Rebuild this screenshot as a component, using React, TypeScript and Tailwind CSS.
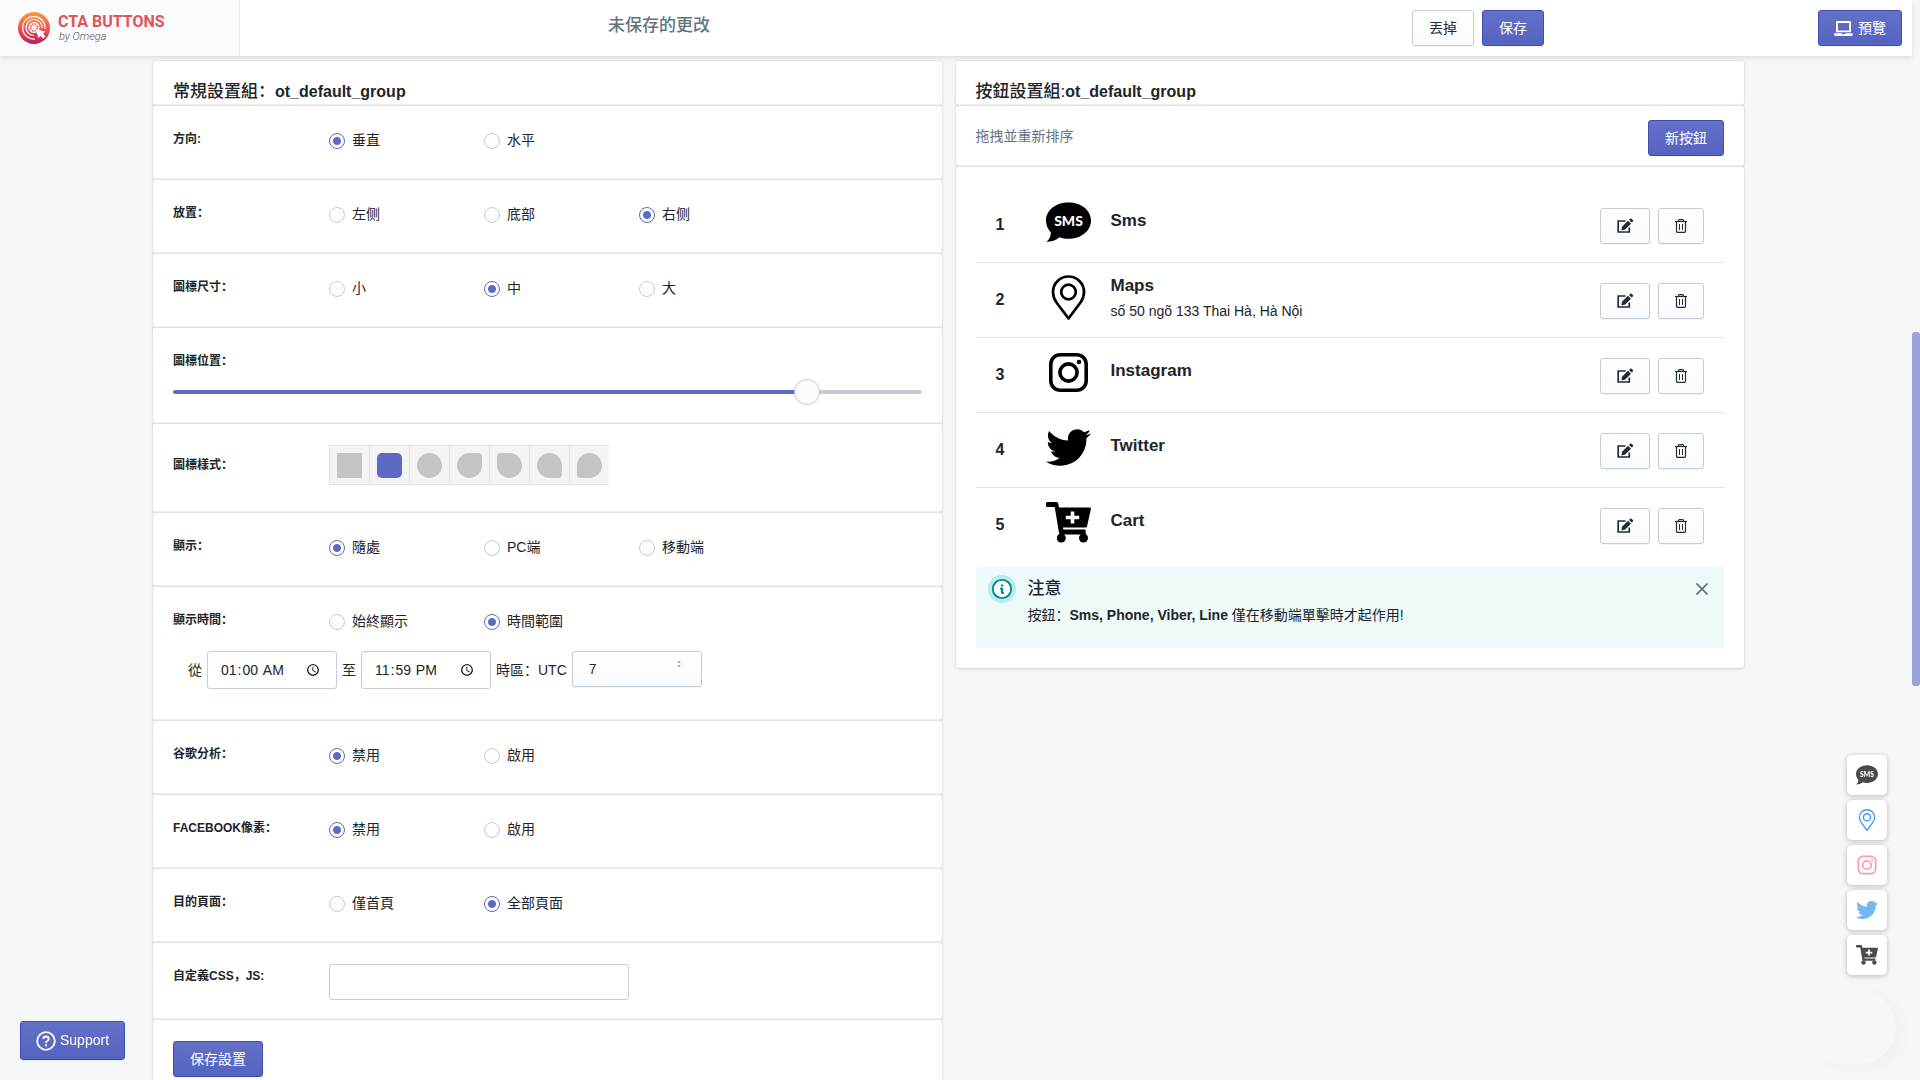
import React from "react";
import { FaLaptop, FaTwitter } from "react-icons/fa";

const primary =
  "rounded-[3px] border border-[#3f4eae] bg-linear-to-b from-[#6371c7] to-[#5563c1] text-white text-sm leading-5 shadow-[0_1px_0_rgba(22,29,37,0.05)]";
const plain =
  "rounded-[3px] border border-[#c4cdd5] bg-linear-to-b from-white to-[#f9fafb] text-[#212b36] text-sm leading-5 shadow-[0_1px_0_rgba(22,29,37,0.05)]";
const card =
  "bg-white rounded-[3px] shadow-[0_0_0_1px_rgba(63,63,68,0.05),0_1px_3px_rgba(63,63,68,0.15)]";
const row = `${card} border-t border-[#dfe3e8] px-5`;

type IconProps = { className?: string };

const SmsIcon = ({ className }: IconProps) => (
  <svg viewBox="0 0 45 45" className={className}>
    <path
      d="M22.5 2.5C35 2.5 45 10 45 20.500C45 31 35 38.800 22.500 38.800C19.400 38.800 16.300 38.300 13.500 37.300C10 40.500 5.500 41.700 .5 41.700C3.500 39 5 36 4.800 32.200C1.800 29.200 0 25 0 20.500C0 10 10 2.500 22.500 2.500Z"
      fill="currentColor"
    />
    <text x="22.5" y="26" textAnchor="middle" fontFamily="Lato, sans-serif" fontWeight="900" fontSize="14" fill="#fff">
      SMS
    </text>
  </svg>
);

const PinIcon = ({ className }: IconProps) => (
  <svg viewBox="0 0 45 45" className={className} fill="none" stroke="currentColor" strokeWidth="2.7">
    <path d="M22.500 43.500L10.500 27.500C8 24 7 21 7 17C7 8.500 14 1.500 22.500 1.500S38 8.500 38 17C38 21 37 24 34.500 27.500Z" strokeLinejoin="round" />
    <circle cx="22.500" cy="17" r="7.300" />
  </svg>
);

const InstagramIcon = ({ className }: IconProps) => (
  <svg viewBox="0 0 45 45" className={className} fill="none" stroke="currentColor" strokeWidth="3.600">
    <rect x="4.800" y="4.800" width="35.400" height="35.400" rx="9.500" />
    <circle cx="22.500" cy="22.500" r="8.600" />
    <circle cx="33" cy="12" r="2.300" fill="currentColor" stroke="none" />
  </svg>
);

const TwitterIcon = ({ className }: IconProps) => <FaTwitter className={className} />;

const CartIcon = ({ className }: IconProps) => (
  <svg viewBox="0 0 45 45" className={className} fill="currentColor">
    <path
      fillRule="evenodd"
      d="M1.500 2H10.500Q12 2 12.300 3.500L13 7.500H43.500Q45.200 7.500 44.900 9L41 26.500Q40.800 27.500 39.800 27.500H17L17.300 29.500H38.500Q39.700 29.500 39.700 30.700V34.500H14.500Q13.300 34.500 13.100 33.300L8.700 7H1.500Q0 7 0 5.500V3.500Q0 2 1.500 2ZM24.700 11.500V15.700H19.800V19.300H24.700V23.500H28.300V19.300H33.200V15.700H28.300V11.500Z"
    />
    <circle cx="15.300" cy="38" r="4.500" />
    <circle cx="37.500" cy="38" r="4.500" />
  </svg>
);

const EditIcon = () => (
  <svg viewBox="0 0 16 16" className="w-4 h-4">
    <path d="M8.500 3H1.200V14H12.300V9.500" fill="none" stroke="currentColor" strokeWidth="1.700" />
    <path d="M4.500 12.500L5 8.700L11 2.700L14 5.700L8.200 11.600Z" fill="currentColor" />
    <path d="M12 1.900L13.200 .7Q14 .2 14.600 .7L15.900 2Q16.400 2.600 15.900 3.400L14.700 4.600Z" fill="currentColor" />
  </svg>
);

const TrashIcon = () => (
  <svg viewBox="0 0 12 14" className="w-3 h-[14px]" fill="none" stroke="currentColor">
    <path d="M0 2.500H12" strokeWidth="1.200" />
    <path d="M3.500 2.500V1.500Q3.500 .6 4.400 .6H7.600Q8.500 .6 8.500 1.500V2.500M1.500 2.500V12.300Q1.500 13.300 2.500 13.300H9.500Q10.500 13.300 10.500 12.300V2.500" strokeWidth="1.200" />
    <path d="M4.500 5V11M7.500 5V11" />
  </svg>
);

const Logo = () => (
  <svg viewBox="0 0 32 32" className="w-8 h-8">
    <defs>
      <linearGradient id="logo" x1="0" y1="0" x2="0" y2="1">
        <stop offset="0" stopColor="#fb9a3c" />
        <stop offset="0.500" stopColor="#ea5a50" />
        <stop offset="1" stopColor="#c2185f" />
      </linearGradient>
    </defs>
    <circle cx="16" cy="16" r="16" fill="url(#logo)" />
    <g fill="none" stroke="#fff" strokeWidth="1.200">
      <path d="M17 27A11.200 11.200 0 1 1 27 17" />
      <path d="M16 23.500A8 8 0 1 1 24 16" />
      <circle cx="16" cy="15.500" r="5" />
      <path d="M16 10.500V20.500M11 15.500H21M12.500 12L19.500 19M19.500 12L12.500 19" />
    </g>
    <path d="M17.500 17L27.500 19.800L24.800 21.500L27.500 24.200L25 26.500L22.300 23.800L20.500 26.200Z" fill="#fff" />
  </svg>
);

const GroupTitle = ({ text }: { text: string }) => (
  <section className={`${card} px-5 pt-[17px] h-11`}>
    <h2 className="text-[17px] leading-7 font-medium">
      {text}
      <span className="text-base font-bold">ot_default_group</span>
    </h2>
  </section>
);

type RowProps = { label: string; name: string; options: string[]; value: number; children?: React.ReactNode };

const RadioRow = ({ label, name, options, value, children }: RowProps) => (
  <section className={`${row} pt-[22px] pb-[26px]`}>
    <div role="radiogroup" aria-labelledby={name} className="flex">
      <h3 id={name} className="w-39 shrink-0 text-xs leading-[22px] font-bold">
        {label}
      </h3>
      {options.map((option, i) => (
        <label key={option} className="w-[155px] flex items-center gap-[7px] text-sm leading-[25px]">
          <input
            type="radio"
            name={name}
            defaultChecked={i === value}
            className="appearance-none w-4 h-4 shrink-0 rounded-full border border-[#c4cdd5] bg-linear-to-b from-white to-[#f9fafb] checked:border-[#5c6ac4] checked:bg-[radial-gradient(circle,#5c6ac4_3.500px,#ffffff_4.500px)]"
          />
          {option}
        </label>
      ))}
    </div>
    {children}
  </section>
);

const shapes = [
  { name: "square", className: "bg-[#c4c4c4]" },
  { name: "rounded", className: "bg-[#5c6ac4] rounded-[5px]" },
  { name: "circle", className: "bg-[#c4c4c4] rounded-full" },
  { name: "top right", className: "bg-[#c4c4c4] rounded-[50%_4px_50%_50%]" },
  { name: "top left", className: "bg-[#c4c4c4] rounded-[4px_50%_50%_50%]" },
  { name: "bottom right", className: "bg-[#c4c4c4] rounded-[50%_50%_4px_50%]" },
  { name: "bottom left", className: "bg-[#c4c4c4] rounded-[50%_50%_50%_4px]" },
];

const buttons = [
  { name: "Sms", Icon: SmsIcon, color: "text-[#4a4a4a]" },
  { name: "Maps", note: "số 50 ngõ 133 Thai Hà, Hà Nội", Icon: PinIcon, color: "text-[#3b99fc]" },
  { name: "Instagram", Icon: InstagramIcon, color: "text-[#fb9cb0]" },
  { name: "Twitter", Icon: TwitterIcon, color: "text-[#76b8ee]" },
  { name: "Cart", Icon: CartIcon, color: "text-[#4a4a4a]" },
];

const Header = () => (
  <header className="relative z-10 h-14 flex bg-white shadow-[0_2px_4px_rgba(0,0,0,0.1)]">
    <div className="w-60 shrink-0 flex items-center gap-2 pl-[18px] bg-[#fafbfc] border-r border-[#ebeef0]">
      <Logo />
      <div className="font-[Roboto,sans-serif]">
        <p className="text-base leading-[18px] font-bold text-[#e0525c]">CTA BUTTONS</p>
        <p className="pl-px text-[11px] leading-3 italic font-light text-[#555555]">by Omega</p>
      </div>
    </div>
    <div className="flex-1 px-[5px]" />
    <div className="w-[936px] flex items-start pt-[10px] gap-2">
      <h2 className="flex-1 text-[17px] leading-8 font-medium text-[#637381]">未保存的更改</h2>
      <button className={`${plain} h-9 px-4`}>丟掉</button>
      <button className={`${primary} h-9 px-4`}>保存</button>
    </div>
    <div className="flex-1 flex justify-end items-start pt-[10px] pr-[10px]">
      <button className={`${primary} h-9 px-[15px] flex items-center gap-[5px]`}>
        <FaLaptop className="w-[19px] h-[15px]" />
        預覽
      </button>
    </div>
  </header>
);

const Settings = () => (
  <div>
    <GroupTitle text="常規設置組：" />
    <RadioRow label="方向:" name="direction" options={["垂直", "水平"]} value={0} />
    <RadioRow label="放置：" name="placement" options={["左侧", "底部", "右侧"]} value={2} />
    <RadioRow label="圖標尺寸：" name="size" options={["小", "中", "大"]} value={1} />
    <section className={`${row} pt-[22px] pb-[11px]`}>
      <label htmlFor="position" className="block text-xs leading-[22px] font-bold">
        圖標位置：
      </label>
      <input
        id="position"
        type="range"
        min="0"
        max="100"
        defaultValue="86"
        className="block w-full h-10 appearance-none bg-transparent [&::-webkit-slider-runnable-track]:h-1 [&::-webkit-slider-runnable-track]:rounded-full [&::-webkit-slider-runnable-track]:bg-[linear-gradient(to_right,#5c6ac4_85%,#c4cdd5_85%)] [&::-webkit-slider-thumb]:appearance-none [&::-webkit-slider-thumb]:w-[26px] [&::-webkit-slider-thumb]:h-[26px] [&::-webkit-slider-thumb]:-mt-[11px] [&::-webkit-slider-thumb]:rounded-full [&::-webkit-slider-thumb]:border [&::-webkit-slider-thumb]:border-[#c4c8cc] [&::-webkit-slider-thumb]:bg-[#fbfcfc]"
      />
    </section>
    <section className={`${row} pt-[21px] pb-[27px] flex items-center`}>
      <h3 className="w-39 text-xs leading-[22px] font-bold">圖標樣式：</h3>
      <div className="flex">
        {shapes.map((shape) => (
          <button
            key={shape.name}
            aria-label={shape.name}
            className="w-10 h-10 flex items-center justify-center bg-[#f4f4f4] border-l border-y border-[#dfe3e8]"
          >
            <span className={`w-[25px] h-[25px] ${shape.className}`} />
          </button>
        ))}
      </div>
    </section>
    <RadioRow label="顯示：" name="device" options={["隨處", "PC端", "移動端"]} value={0} />
    <RadioRow label="顯示時間：" name="time" options={["始終顯示", "時間範圍"]} value={1}>
      <div className="flex items-center pt-[17px] pl-[15px] pb-[5px] gap-[5px] text-sm leading-5">
        <label htmlFor="from">從</label>
        <input id="from" type="time" defaultValue="01:00" className="w-[130px] h-[38px] px-3 rounded-[3px] border border-[#c4cdd5] bg-white" />
        <label htmlFor="to">至</label>
        <input id="to" type="time" defaultValue="23:59" className="w-[130px] h-[38px] px-3 rounded-[3px] border border-[#c4cdd5] bg-white" />
        <label htmlFor="zone">時區：UTC</label>
        <div className="relative self-start">
          <select id="zone" defaultValue="7" className={`${plain} appearance-none block w-[130px] h-9 px-4`}>
            <option>7</option>
          </select>
          <svg viewBox="0 0 4 6" className="absolute right-[21px] top-[10px] w-1 h-[6px] pointer-events-none" fill="#637381">
            <path d="M0 1.500L2 0L4 1.500ZM0 4.500L2 6L4 4.500Z" />
          </svg>
        </div>
      </div>
    </RadioRow>
    <RadioRow label="谷歌分析：" name="analytics" options={["禁用", "啟用"]} value={0} />
    <RadioRow label="FACEBOOK像素：" name="pixel" options={["禁用", "啟用"]} value={0} />
    <RadioRow label="目的頁面：" name="pages" options={["僅首頁", "全部頁面"]} value={1} />
    <section className={`${row} pt-[21px] pb-[19px] flex`}>
      <label htmlFor="custom" className="w-39 pt-px text-xs leading-[22px] font-bold">
        自定義CSS，JS:
      </label>
      <input id="custom" type="text" className="w-[300px] h-9 px-3 rounded-[3px] border border-[#c4cdd5] bg-white text-sm" />
    </section>
    <section className={`${row} pt-[21px] pb-5`}>
      <button className={`${primary} h-9 px-4`}>保存設置</button>
    </section>
  </div>
);

const ButtonList = () => (
  <div>
    <GroupTitle text="按鈕設置組:" />
    <section className={`${row} h-[61px] flex justify-between items-start pt-[14px]`}>
      <p className="text-sm leading-8 text-[#637381]">拖拽並重新排序</p>
      <button className={`${primary} h-9 px-4`}>新按鈕</button>
    </section>
    <section className={`${row} pt-[21px] pb-5`}>
      <ul>
        {buttons.map(({ name, note, Icon }, i) => (
          <li key={name} className="h-[75px] flex items-start px-5 border-b border-[#dfe3e8] last:border-b-0">
            <span className="w-[50px] pt-[25px] text-base leading-6 font-bold">{i + 1}</span>
            <Icon className="w-[45px] h-[45px] mt-3 text-black" />
            <div className={`flex-1 pl-5 ${note ? "pt-[11px]" : "pt-[21px]"}`}>
              <h3 className="text-[17px] leading-6 font-bold">{name}</h3>
              {note && <p className="pt-[3px] text-sm leading-5">{note}</p>}
            </div>
            <div className="flex gap-2 pt-5">
              <button aria-label="edit" className={`${plain} w-[50px] h-9 flex items-center justify-center`}>
                <EditIcon />
              </button>
              <button aria-label="delete" className={`${plain} w-[46px] h-9 flex items-center justify-center`}>
                <TrashIcon />
              </button>
            </div>
          </li>
        ))}
      </ul>
      <div className="mt-1 h-[81px] flex items-start px-3 pt-2 rounded-[3px] bg-[#eef9f9]">
        <svg viewBox="0 0 28 28" className="w-7 h-7">
          <circle cx="14" cy="14" r="14" fill="#b7ecec" />
          <circle cx="14" cy="14" r="9.200" fill="#fff" stroke="#00848e" strokeWidth="1.800" />
          <path d="M13 9.500H15.200V11.500H13ZM12 12.800H15V17H16V18.800H13V14.500H12Z" fill="#00848e" />
        </svg>
        <div className="flex-1 pl-3">
          <h3 className="text-[17px] leading-7 font-medium">注意</h3>
          <p className="text-sm leading-6">
            按鈕：<b>Sms, Phone, Viber, Line</b> 僅在移動端單擊時才起作用!
          </p>
        </div>
        <button aria-label="close" className="p-1 mt-1 text-[#637381]">
          <svg viewBox="0 0 12 12" className="w-3 h-3" fill="none" stroke="currentColor" strokeWidth="1.700">
            <path d="M.5 .5L11.500 11.500M11.500 .5L.5 11.500" />
          </svg>
        </button>
      </div>
    </section>
  </div>
);

const App = () => {
  return (
    <div className="h-screen overflow-hidden pr-2 bg-[#f4f6f8] text-[#212529] font-['Liberation_Sans','Noto_Sans_CJK_SC',sans-serif]">
      <Header />
      <main className="ml-[153px] mr-42 pt-[5px] grid grid-cols-2 gap-[14px] items-start">
        <Settings />
        <ButtonList />
      </main>

      <aside className="fixed right-[33px] bottom-[105px] flex flex-col gap-[5px]">
        {buttons.map(({ name, Icon, color }) => (
          <a key={name} href="#" aria-label={name} className={`w-10 h-10 flex items-center justify-center rounded-[5px] bg-white shadow-[0_1px_5px_rgba(0,0,0,0.25)] ${color}`}>
            <Icon className="w-[22px] h-[22px]" />
          </a>
        ))}
      </aside>
      <div className="fixed right-6 bottom-4 w-[90px] h-[74px] rounded-full bg-[#f4f6f8] shadow-[6px_3px_16px_rgba(0,0,0,0.03)]" />

      <button className={`${primary} fixed left-5 bottom-5 h-[39px] px-[15px] flex items-center gap-1`}>
        <svg viewBox="0 0 20 20" className="w-5 h-5" fill="none" stroke="currentColor" strokeWidth="1.800">
          <circle cx="10" cy="10" r="8.800" />
          <path d="M7.300 8Q7.300 5.500 10 5.500T12.700 8Q12.700 9.500 11 10.200Q10 10.700 10 12" />
          <path d="M10 13.300V15.300" strokeWidth="2" />
        </svg>
        <span className="pb-[2px]">Support</span>
      </button>
      <div className="fixed right-0 top-[332px] w-2 h-[354px] rounded-[3px] bg-[#9aa3dc]" />
    </div>
  );
};

export default App;
